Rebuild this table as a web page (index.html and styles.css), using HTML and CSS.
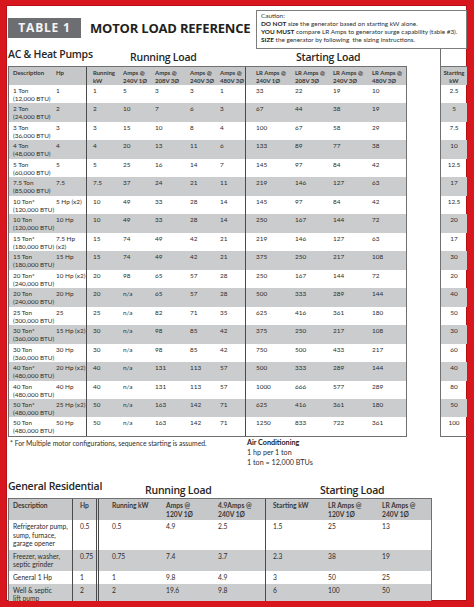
FILE: index.html
```html
<!DOCTYPE html>
<html lang="en">
<head>
<meta charset="utf-8">
<title>Motor Load Reference</title>
<link rel="stylesheet" href="styles.css">
</head>
<body>
<div class="frame">
  <header class="masthead">
    <div class="badge">TABLE 1</div>
    <h1 class="title">MOTOR LOAD REFERENCE</h1>
    <div class="caution">
      <p>Caution:</p>
      <p><b>DO NOT</b> size the generator based on starting kW alone.</p>
      <p><b>YOU MUST</b> compare LR Amps to generator surge capability (table #3).</p>
      <p><b>SIZE</b> the generator by following&nbsp; the sizing instructions.</p>
    </div>
  </header>

  <section class="ac">
    <div class="ac-main">
      <div class="titles ac-titles">
        <h2 class="sec">AC &amp; Heat Pumps</h2>
        <h3 class="load">Running Load</h3>
        <h3 class="load">Starting Load</h3>
      </div>
      <table class="grid ac-table">
        <thead>
          <tr><th>Description</th><th>Hp</th><th>Running<br>kW</th><th>Amps @<br>240V 1Ø</th><th>Amps @<br>208V 3Ø</th><th>Amps @<br>240V 3Ø</th><th>Amps @<br>480V 3Ø</th><th>LR Amps @<br>240V 1Ø</th><th>LR Amps @<br>208V 3Ø</th><th>LR Amps @<br>240V 3Ø</th><th>LR Amps @<br>480V 3Ø</th></tr>
        </thead>
        <tbody>
          <tr><td>1 Ton<br>(12,000 BTU)</td><td>1</td><td>1</td><td>5</td><td>3</td><td>3</td><td>1</td><td>33</td><td>22</td><td>19</td><td>10</td></tr>
          <tr><td>2 Ton<br>(24,000 BTU)</td><td>2</td><td>2</td><td>10</td><td>7</td><td>6</td><td>3</td><td>67</td><td>44</td><td>38</td><td>19</td></tr>
          <tr><td>3 Ton<br>(36,000 BTU)</td><td>3</td><td>3</td><td>15</td><td>10</td><td>8</td><td>4</td><td>100</td><td>67</td><td>58</td><td>29</td></tr>
          <tr><td>4 Ton<br>(48,000 BTU)</td><td>4</td><td>4</td><td>20</td><td>13</td><td>11</td><td>6</td><td>133</td><td>89</td><td>77</td><td>38</td></tr>
          <tr><td>5 Ton<br>(60,000 BTU)</td><td>5</td><td>5</td><td>25</td><td>16</td><td>14</td><td>7</td><td>145</td><td>97</td><td>84</td><td>42</td></tr>
          <tr><td>7.5 Ton<br>(85,000 BTU)</td><td>7.5</td><td>7.5</td><td>37</td><td>24</td><td>21</td><td>11</td><td>219</td><td>146</td><td>127</td><td>63</td></tr>
          <tr><td>10 Ton*<br>(120,000 BTU)</td><td>5 Hp (x2)</td><td>10</td><td>49</td><td>33</td><td>28</td><td>14</td><td>145</td><td>97</td><td>84</td><td>42</td></tr>
          <tr><td>10 Ton<br>(120,000 BTU)</td><td>10 Hp</td><td>10</td><td>49</td><td>33</td><td>28</td><td>14</td><td>250</td><td>167</td><td>144</td><td>72</td></tr>
          <tr><td>15 Ton*<br>(180,000 BTU)</td><td>7.5 Hp<br>(x2)</td><td>15</td><td>74</td><td>49</td><td>42</td><td>21</td><td>219</td><td>146</td><td>127</td><td>63</td></tr>
          <tr><td>15 Ton<br>(180,000 BTU)</td><td>15 Hp</td><td>15</td><td>74</td><td>49</td><td>42</td><td>21</td><td>375</td><td>250</td><td>217</td><td>108</td></tr>
          <tr><td>20 Ton*<br>(240,000 BTU)</td><td>10 Hp (x2)</td><td>20</td><td>98</td><td>65</td><td>57</td><td>28</td><td>250</td><td>167</td><td>144</td><td>72</td></tr>
          <tr><td>20 Ton<br>(240,000 BTU)</td><td>20 Hp</td><td>20</td><td>n/a</td><td>65</td><td>57</td><td>28</td><td>500</td><td>333</td><td>289</td><td>144</td></tr>
          <tr><td>25 Ton<br>(300,000 BTU)</td><td>25</td><td>25</td><td>n/a</td><td>82</td><td>71</td><td>35</td><td>625</td><td>416</td><td>361</td><td>180</td></tr>
          <tr><td>30 Ton*<br>(360,000 BTU)</td><td>15 Hp (x2)</td><td>30</td><td>n/a</td><td>98</td><td>85</td><td>42</td><td>375</td><td>250</td><td>217</td><td>108</td></tr>
          <tr><td>30 Ton<br>(360,000 BTU)</td><td>30 Hp</td><td>30</td><td>n/a</td><td>98</td><td>85</td><td>42</td><td>750</td><td>500</td><td>433</td><td>217</td></tr>
          <tr><td>40 Ton*<br>(480,000 BTU)</td><td>20 Hp (x2)</td><td>40</td><td>n/a</td><td>131</td><td>113</td><td>57</td><td>500</td><td>333</td><td>289</td><td>144</td></tr>
          <tr><td>40 Ton<br>(480,000 BTU)</td><td>40 Hp</td><td>40</td><td>n/a</td><td>131</td><td>113</td><td>57</td><td>1000</td><td>666</td><td>577</td><td>289</td></tr>
          <tr><td>50 Ton*<br>(480,000 BTU)</td><td>25 Hp (x2)</td><td>50</td><td>n/a</td><td>163</td><td>142</td><td>71</td><td>625</td><td>416</td><td>361</td><td>180</td></tr>
          <tr><td>50 Ton<br>(480,000 BTU)</td><td>50 Hp</td><td>50</td><td>n/a</td><td>163</td><td>142</td><td>71</td><td>1250</td><td>833</td><td>722</td><td>361</td></tr>
        </tbody>
      </table>
    </div>
    <div class="kw-frag">
      <table class="grid kw-table">
        <thead><tr><th>Starting<br>kW</th></tr></thead>
        <tbody>
          <tr><td>2.5</td></tr><tr><td>5</td></tr><tr><td>7.5</td></tr><tr><td>10</td></tr><tr><td>12.5</td></tr>
          <tr><td>17</td></tr><tr><td>12.5</td></tr><tr><td>20</td></tr><tr><td>17</td></tr><tr><td>30</td></tr>
          <tr><td>20</td></tr><tr><td>40</td></tr><tr><td>50</td></tr><tr><td>30</td></tr><tr><td>60</td></tr>
          <tr><td>40</td></tr><tr><td>80</td></tr><tr><td>50</td></tr><tr><td>100</td></tr>
        </tbody>
      </table>
    </div>
  </section>

  <div class="notes">
    <p class="foot">* For Multiple motor configurations, sequence starting is assumed.</p>
    <div class="air">
      <p class="air-head">Air Conditioning</p>
      <p>1 hp per 1 ton</p>
      <p>1 ton = 12,000 BTUs</p>
    </div>
  </div>

  <section class="gr">
    <div class="titles gr-titles">
      <h2 class="sec">General Residential</h2>
      <h3 class="load">Running Load</h3>
      <h3 class="load">Starting Load</h3>
    </div>
    <table class="grid gr-table">
      <thead>
        <tr><th>Description</th><th>Hp</th><th>Running kW</th><th>Amps @<br>120V 1Ø</th><th>4.9Amps @<br>240V 1Ø</th><th>Starting kW</th><th>LR Amps @<br>120V 1Ø</th><th>LR Amps @<br>240V 1Ø</th></tr>
      </thead>
      <tbody>
        <tr><td>Refrigerator pump,<br>sump, furnace,<br>garage opener</td><td>0.5</td><td>0.5</td><td>4.9</td><td>2.5</td><td>1.5</td><td>25</td><td>13</td></tr>
        <tr><td>Freezer, washer,<br>septic grinder</td><td>0.75</td><td>0.75</td><td>7.4</td><td>3.7</td><td>2.3</td><td>38</td><td>19</td></tr>
        <tr><td>General 1 Hp</td><td>1</td><td>1</td><td>9.8</td><td>4.9</td><td>3</td><td>50</td><td>25</td></tr>
        <tr><td>Well &amp; septic<br>lift pump</td><td>2</td><td>2</td><td>19.6</td><td>9.8</td><td>6</td><td>100</td><td>50</td></tr>
      </tbody>
    </table>
  </section>
</div>
</body>
</html>
```

FILE: styles.css
```css
* { box-sizing: border-box; }

html, body {
  margin: 0;
  padding: 0;
  background: #ffffff;
}

body {
  font-family: Lato, "Open Sans", sans-serif;
  color: #2e2e2e;
}

p, h1, h2, h3 { margin: 0; }

.frame {
  width: 474px;
  height: 607px;
  overflow: hidden;
  background: #ffffff;
  border-style: solid;
  border-color: #d8161e;
  border-width: 5px 7px 6px 6px;
  box-shadow: inset 0 0 0 1px #b70f16;
  padding-left: 2px;
}

/* ---------- masthead ---------- */
.masthead {
  display: flex;
  align-items: flex-start;
  height: 44px;
}

.badge {
  margin-top: 13px;
  width: 73px;
  height: 20px;
  background: #6d6e71;
  color: #f4f4f4;
  font-family: "Open Sans", sans-serif;
  font-weight: 700;
  font-size: 12px;
  line-height: 20px;
  letter-spacing: 0.8px;
  text-align: center;
}

.title {
  margin-top: 13px;
  margin-left: 9px;
  font-family: "Open Sans", sans-serif;
  font-size: 13px;
  line-height: 20px;
  font-weight: 700;
  letter-spacing: -0.2px;
  color: #231f20;
}

.caution {
  margin-left: auto;
  margin-top: 5px;
  width: 211px;
  height: 39px;
  border: 1px solid #7d7d7d;
  padding: 1px 0 0 4px;
  font-size: 6.4px;
  line-height: 8.1px;
  color: #2e2e2e;
  white-space: nowrap;
}

.caution b { font-weight: 700; color: #1e1e1e; }

/* ---------- section titles ---------- */
.titles {
  display: flex;
  align-items: flex-start;
}

.sec, .load {
  font-family: "Open Sans", sans-serif;
  font-size: 10.5px;
  font-weight: 600;
  letter-spacing: -0.25px;
  color: #262626;
  white-space: nowrap;
  flex: none;
}

.ac-titles { height: 17px; }
.ac-titles .sec { width: 122px; line-height: 10px; }
.ac-titles .load { width: 166px; line-height: 17px; }

.gr-titles { height: 19px; }
.gr-titles .sec { width: 137px; line-height: 14px; }
.gr-titles .load { width: 175px; line-height: 15px; margin-top: 4px; }

/* ---------- tables ---------- */
.grid {
  border-collapse: separate;
  border-spacing: 0;
  table-layout: fixed;
  border: 1px solid #707070;
}

.grid th, .grid td {
  padding: 0 0 0 4px;
  text-align: left;
  vertical-align: top;
  white-space: nowrap;
}

.grid th {
  background: #c6c7c8;
  color: #383838;
  font-weight: 700;
}

.grid td { color: #2c2c2c; }

.grid tbody tr:nth-child(even) td { background: #cbcccd; }

/* AC table */
.ac {
  display: flex;
  align-items: stretch;
}

.ac-main { width: 399px; flex: none; }

.ac-table { width: 399px; }

.ac-table th, .kw-table th {
  font-size: 6px;
  line-height: 8px;
  padding-top: 2px;
  height: 18px;
}

.ac-table td, .kw-table td {
  font-size: 6.4px;
  line-height: 8px;
  padding-top: 2px;
}

.ac-table tbody tr, .kw-table tbody tr { height: 18.47px; }

.ac-table th:nth-child(1) { width: 44px; }
.ac-table th:nth-child(2) { width: 34px; }
.ac-table th:nth-child(3) { width: 32px; }
.ac-table th:nth-child(4) { width: 32px; }
.ac-table th:nth-child(5) { width: 35px; }
.ac-table th:nth-child(6) { width: 30px; }
.ac-table th:nth-child(7) { width: 30px; }
.ac-table th:nth-child(8) { width: 45px; }
.ac-table th:nth-child(9) { width: 38px; }
.ac-table th:nth-child(10) { width: 39px; }
.ac-table th:nth-child(11) { width: 38px; }

.ac-table th:nth-child(2), .ac-table td:nth-child(2),
.ac-table th:nth-child(7), .ac-table td:nth-child(7) {
  border-right: 1px solid #4a4a4a;
}
.ac-table th:nth-child(2), .ac-table td:nth-child(2) { padding-left: 3px; }
.ac-table th:nth-child(3), .ac-table td:nth-child(3) { padding-left: 6px; }
.ac-table th:nth-child(8), .ac-table td:nth-child(8) { padding-left: 10px; }

/* starting kW fragment */
.kw-frag {
  margin-left: 33px;
  flex: 1;
  padding-top: 17px;
  border-left: 1px solid #707070;
}

.kw-table {
  width: 100%;
  border-left: none;
  border-right: none;
}
.kw-table th, .kw-table td {
  text-align: center;
  padding-left: 0;
}

/* ---------- notes ---------- */
.notes {
  display: flex;
  height: 42px;
  font-size: 6.8px;
  line-height: 10px;
  color: #2e2e2e;
}

.foot { width: 239px; flex: none; padding: 1px 0 0 2px; white-space: nowrap; }

.air { padding-top: 1px; font-size: 7.2px; }
.air p { white-space: nowrap; }
.air .air-head { font-weight: 700; color: #222222; }

/* ---------- general residential ---------- */
.gr-table { width: 424px; }

.gr-table th, .gr-table td {
  font-size: 6.7px;
  line-height: 8.3px;
  padding-top: 2.3px;
  padding-bottom: 2.3px;
}

.gr-table th:nth-child(1) { width: 64px; }
.gr-table th:nth-child(2) { width: 26px; }
.gr-table th:nth-child(3) { width: 63px; }
.gr-table th:nth-child(4) { width: 52px; }
.gr-table th:nth-child(5) { width: 52px; }
.gr-table th:nth-child(6) { width: 58px; }
.gr-table th:nth-child(7) { width: 54px; }
.gr-table th:nth-child(8) { width: 53px; }

.gr-table th:nth-child(1), .gr-table td:nth-child(1),
.gr-table th:nth-child(5), .gr-table td:nth-child(5) {
  border-right: 1px solid #4a4a4a;
}
.gr-table th:nth-child(2), .gr-table td:nth-child(2) {
  border-right: 3px double #4a4a4a;
  padding-left: 7px;
}
.gr-table th:nth-child(3), .gr-table td:nth-child(3) { padding-left: 13px; }
.gr-table th:nth-child(6), .gr-table td:nth-child(6) { padding-left: 7px; }
```
